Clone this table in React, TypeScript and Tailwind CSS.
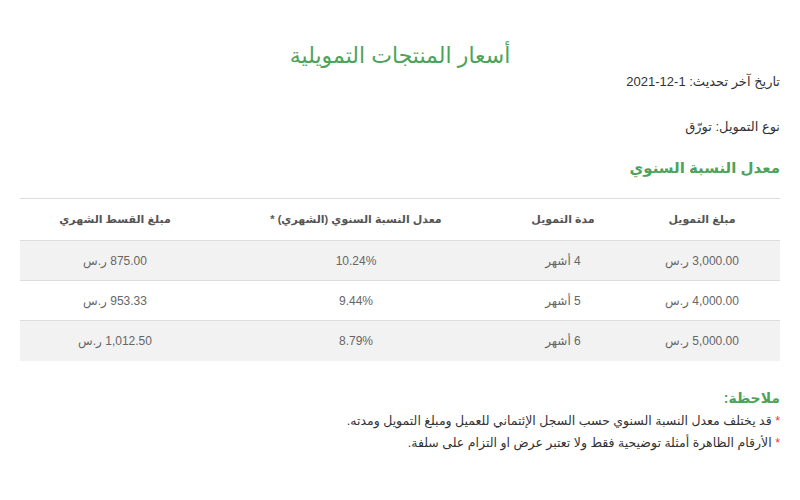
import React from 'react';

const rows = [
    { amount: '3,000.00', months: '4 أشهر', rate: '10.24%', installment: '875.00' },
    { amount: '4,000.00', months: '5 أشهر', rate: '9.44%', installment: '953.33' },
    { amount: '5,000.00', months: '6 أشهر', rate: '8.79%', installment: '1,012.50' },
];

const font = { fontFamily: '"Liberation Sans", "DejaVu Sans", sans-serif' };

const App: React.FC = () => (
    <div dir="rtl" className="w-[800px] h-[500px] bg-white overflow-hidden px-5 text-[#444]" style={font}>
        <h1 className="pt-[40px] text-center text-[22px] leading-[32px] text-[#4ca35a] font-normal">أسعار المنتجات التمويلية</h1>

        <p className="mt-[1px] text-[13px] leading-[18px] text-[#333]">تاريخ آخر تحديث: 1-12-2021</p>
        <p className="mt-[27px] text-[13px] leading-[18px] text-[#333]">نوع التمويل: تورّق</p>

        <h2 className="mt-[21px] text-[15px] leading-[22px] font-bold text-[#4ca35a]">معدل النسبة السنوي</h2>

        <table className="mt-[19px] w-[760px] table-fixed border-collapse text-center">
            <colgroup>
                <col className="w-[156px]" />
                <col className="w-[122px]" />
                <col className="w-[292px]" />
                <col className="w-[190px]" />
            </colgroup>
            <thead>
                <tr className="h-[42px] border-t border-[#ddd] text-[11px] font-bold text-[#555]">
                    <th>مبلغ التمويل</th>
                    <th>مدة التمويل</th>
                    <th>معدل النسبة السنوي (الشهري) *</th>
                    <th>مبلغ القسط الشهري</th>
                </tr>
            </thead>
            <tbody className="text-[12px] text-[#666]">
                {rows.map((r, i) => (
                    <tr key={r.amount} className={`h-[40px] border-t border-[#ddd] ${i % 2 === 0 ? 'bg-[#f2f2f2]' : 'bg-white'}`}>
                        <td>{r.amount} ر.س</td>
                        <td>{r.months}</td>
                        <td>{r.rate}</td>
                        <td>{r.installment} ر.س</td>
                    </tr>
                ))}
            </tbody>
        </table>

        <h3 className="mt-[27px] text-[14px] leading-[20px] font-bold text-[#4ca35a]">ملاحظة:</h3>
        <ul className="mt-[2px] text-[12.5px] leading-[22px] text-[#333]">
            <li><span className="text-[#e53935]">* </span>قد يختلف معدل النسبة السنوي حسب السجل الإئتماني للعميل ومبلغ التمويل ومدته.</li>
            <li><span className="text-[#e53935]">* </span>الأرقام الظاهرة أمثلة توضيحية فقط ولا تعتبر عرض او التزام على سلفة.</li>
        </ul>
    </div>
);

export default App;
